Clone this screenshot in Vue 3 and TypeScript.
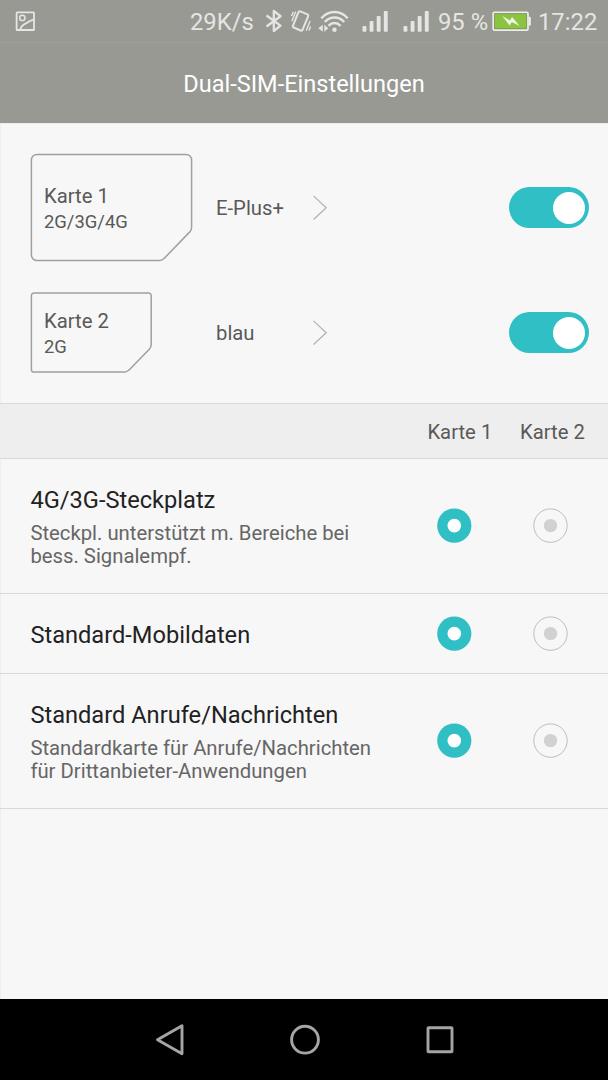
<script setup lang="ts">
import { ref } from 'vue'

interface SimCard {
  name: string
  bands: string
  carrier: string
  size: 'large' | 'small'
  width: number
  height: number
  outline: string
  enabled: boolean
}

interface SlotSetting {
  title: string
  summary: string[]
  selected: number
}

const cards = ref<SimCard[]>([
  {
    name: 'Karte 1',
    bands: '2G/3G/4G',
    carrier: 'E-Plus+',
    size: 'large',
    width: 164,
    height: 109,
    outline: 'M8 1.4H157a5.6 5.6 0 0 1 5.6 5.6V74.5q0 2.6-1.8 4.4L137 103.5q-3.8 4.1-6.8 4.1H8a5.6 5.6 0 0 1-5.6-5.6V7a5.6 5.6 0 0 1 5.6-5.6Z',
    enabled: true
  },
  {
    name: 'Karte 2',
    bands: '2G',
    carrier: 'blau',
    size: 'small',
    width: 124,
    height: 82,
    outline: 'M5 .900H119.600a2.600 2.600 0 0 1 2.600 2.600V52.500q0 2.800-1.900 4.800L101.600 76.400q-3.600 3.600-5.800 3.600H5a2.600 2.600 0 0 1-2.600-2.600V3.500a2.600 2.600 0 0 1 2.600-2.600Z',
    enabled: true
  }
])

const settings = ref<SlotSetting[]>([
  { title: '4G/3G-Steckplatz', summary: ['Steckpl. unterstützt m. Bereiche bei', 'bess. Signalempf.'], selected: 0 },
  { title: 'Standard-Mobildaten', summary: [], selected: 0 },
  { title: 'Standard Anrufe/Nachrichten', summary: ['Standardkarte für Anrufe/Nachrichten', 'für Drittanbieter-Anwendungen'], selected: 0 }
])
</script>

<template>
  <div class="screen">
    <header class="status">
      <svg class="picture" width="20" height="20" viewBox="0 0 20 20" fill="none" stroke="#e5e5e3" stroke-width="1.8">
        <rect x="1.6" y="1.4" width="17.4" height="17.6" rx=".6" />
        <circle cx="7.300" cy="6.900" r="2.700" stroke-width="1.500" />
        <path d="M5.300 18.400c1.200-4.500 3.600-5.200 6.200-6.300C14.300 10.900 15.100 9.200 18.800 8.600" />
      </svg>
      <span class="speed">29K/s</span>
      <svg class="bluetooth" width="18" height="24" viewBox="0 0 18 24" fill="none" stroke="#e5e5e3" stroke-width="2.300" stroke-linejoin="round">
        <path d="M1.500 6.500 15.500 16.600 8.800 22V2l6.700 5.200L1.500 17.500" />
      </svg>
      <svg class="vibrate" width="22" height="24" viewBox="0 0 22 24" fill="none" stroke="#e5e5e3">
        <path d="m10.200 2.400 7.300 3q1.200.5.700 1.700l-5.700 13.700q-.5 1.200-1.700.7l-7.200-3q-1.200-.5-.7-1.700L8.500 3.200q.5-1.300 1.700-.8Z" stroke-width="2" />
        <path d="M1.500 7 3.300 2.900M1.800 12.200 5.800 2.600M20.100 12 16.200 21.700M20.600 17.500 19 21.500" stroke-width="1.400" />
      </svg>
      <svg class="wifi" width="32" height="24" viewBox="0 0 32 24">
        <g fill="none" stroke="#e5e5e3" stroke-width="2.500">
          <path d="M3.300 9.300C10.500 1 22.500 1 29.700 9.300" />
          <path d="M6.800 13c5.400-6 14-6 19.400 0" />
          <path d="M10.500 16.800c3.400-3.700 8.600-3.700 12 0" />
        </g>
        <circle cx="16.500" cy="20.800" r="2.200" fill="#e5e5e3" />
        <path d="M4.800 15.800v7L.3 19.300ZM6.300 15.800v7l4-3.500Z" fill="#e5e5e3" />
      </svg>
      <svg v-for="n in 2" :key="n" :class="'signal signal-' + n" width="26" height="22" viewBox="0 0 26 22" fill="#e5e5e3">
        <rect x=".5" y="16.100" width="3.900" height="5.700" rx="1" />
        <rect x="7.600" y="11.100" width="3.900" height="10.700" rx="1" />
        <rect x="14.700" y="6.100" width="3.900" height="15.700" rx="1" />
        <rect x="21.800" y="1" width="3.900" height="20.800" rx="1" />
      </svg>
      <span class="percent">95 %</span>
      <svg class="battery" width="40" height="20" viewBox="0 0 40 20">
        <rect x="1.200" y="1.300" width="34.800" height="17.800" rx="1.200" fill="#8bc53f" stroke="#ededec" stroke-width="1.700" />
        <rect x="2.600" y="2.700" width="32" height="15" fill="none" stroke="#858c76" stroke-width=".8" />
        <path d="M36.800 5.700h.8q1.200 0 1.200 1.200v6.600q0 1.200-1.200 1.200h-.8Z" fill="#ededec" />
        <path d="m10.200 4.900 7.800 4.700 2-3.700 7.700 9.200-8-4.200-2 3.700Z" fill="#f2f4ed" />
      </svg>
      <span class="clock">17:22</span>
    </header>

    <div class="title-bar"><h1>Dual-SIM-Einstellungen</h1></div>

    <main class="content">
      <section class="cards">
        <div v-for="card in cards" :key="card.name" class="card-row" :class="card.size">
          <div class="sim-column">
            <div class="sim" :class="card.size">
              <svg class="outline" :width="card.width" :height="card.height" fill="none" stroke="#a0a0a0" stroke-width="1.500">
                <path :d="card.outline" />
              </svg>
              <span>{{ card.name }}</span>
              <span class="bands">{{ card.bands }}</span>
            </div>
          </div>
          <span class="carrier">{{ card.carrier }}</span>
          <svg class="chevron" width="16" height="26" viewBox="0 0 16 26" fill="none" stroke="#b1b1b1" stroke-width="1.200">
            <path d="M1.500 .900 14.200 12.700 1.500 24.500" />
          </svg>
          <button class="toggle" :class="{ on: card.enabled }" role="switch" :aria-checked="card.enabled" @click="card.enabled = !card.enabled">
            <i class="knob"></i>
          </button>
        </div>
      </section>

      <div class="columns">
        <span class="first">Karte 1</span>
        <span class="second">Karte 2</span>
      </div>

      <section v-for="item in settings" :key="item.title" class="setting" :class="{ short: !item.summary.length }">
        <div class="copy">
          <h2>{{ item.title }}</h2>
          <p v-for="line in item.summary" :key="line">{{ line }}</p>
        </div>
        <button v-for="(_, i) in cards" :key="i" class="radio" role="radio" :aria-checked="item.selected === i" @click="item.selected = i">
          <svg width="36" height="36" viewBox="0 0 36 36">
            <template v-if="item.selected === i">
              <circle cx="18.300" cy="17.600" r="17.100" fill="#2fbfc5" />
              <circle cx="18.300" cy="17.600" r="6.800" fill="#fff" />
            </template>
            <template v-else>
              <circle cx="18.500" cy="17.600" r="16.700" fill="none" stroke="#bdbdbd" stroke-width="1" />
              <circle cx="18.500" cy="17.600" r="6.700" fill="#d0d1d1" />
            </template>
          </svg>
        </button>
      </section>
    </main>

    <nav class="nav-bar">
      <svg class="back" width="30" height="34" viewBox="0 0 30 34"><path d="M27 2.700v28L2.500 16.700Z" /></svg>
      <svg class="home" width="32" height="34" viewBox="0 0 32 34"><circle cx="16" cy="16.700" r="13.400" /></svg>
      <svg class="recent" width="30" height="34" viewBox="0 0 30 34"><rect x="3" y="4.700" width="24" height="24" rx=".5" /></svg>
    </nav>
  </div>
</template>

<style>
body { margin: 0; }
</style>

<style scoped>
.screen {
  width: 608px;
  height: 1080px;
  overflow: hidden;
  display: flex;
  flex-direction: column;
  background: #f7f7f7;
  font-family: Roboto, "Noto Sans", sans-serif;
  color: #595959;
}
h1, h2, p { margin: 0; font-weight: 400; }
svg { display: block; flex: none; }
button { padding: 0; border: 0; background: none; flex: none; }

.status {
  box-sizing: border-box;
  height: 43px;
  flex: none;
  display: flex;
  align-items: center;
  border-bottom: 1px solid #9fa09a;
  background: #989993;
  color: #e5e5e3;
  font-size: 23.800px;
  line-height: 28px;
  white-space: nowrap;
}
.status span { flex: none; margin-top: 2px; }
.picture { margin-left: 15px; }
.speed { width: 65px; margin-left: 155px; }
.bluetooth { margin-left: 10px; }
.vibrate { margin-left: 7px; }
.wifi { margin-left: 6px; }
.signal-1 { margin-left: 12px; }
.signal-2 { margin-left: 15px; }
.percent { width: 51px; margin-left: 9px; }
.battery { margin-left: 3px; }
.clock { margin-left: 6px; }

.title-bar {
  height: 80px;
  flex: none;
  display: flex;
  align-items: center;
  justify-content: center;
  background: #989993;
}
h1 { color: #fff; font-size: 23.550px; line-height: 28px; margin-top: 1px; }

.content {
  flex: 1;
  border-left: 1px solid #efefef;
  border-top: 1px solid #ececec;
}
.cards { box-sizing: border-box; height: 279px; padding: 29px 19px 0 28px; }
.card-row { display: flex; align-items: center; font-size: 20.270px; line-height: 26px; }
.card-row.large { height: 109px; }
.card-row.small { height: 82px; margin-top: 29.500px; }
.sim-column { width: 187px; flex: none; }
.sim { position: relative; box-sizing: border-box; display: flex; flex-direction: column; justify-content: center; padding-left: 15px; }
.sim.large { width: 163px; height: 109px; padding-top: 3px; }
.sim.small { width: 123px; height: 82px; padding-top: 2px; }
.outline { position: absolute; left: 0; top: 0; }
.bands { font-size: 18.400px; }
.carrier { width: 96px; flex: none; margin-top: 1px; }
.toggle {
  width: 80px;
  height: 41px;
  margin-left: auto;
  padding: 0 4px;
  border-radius: 21px;
  background: #c9c9c9;
  display: flex;
  align-items: center;
}
.toggle.on { background: #2fbfc5; justify-content: flex-end; }
.knob { width: 32px; height: 32px; border-radius: 50%; background: #fff; }

.columns {
  box-sizing: border-box;
  height: 56px;
  margin-left: -1px;
  padding-top: 1px;
  display: flex;
  align-items: center;
  background: #eee;
  border-top: 1px solid #d9d9d9;
  border-bottom: 1px solid #d9d9d9;
  font-size: 20.270px;
  line-height: 24px;
}
.first { margin-left: 427.400px; width: 92.600px; }

.setting {
  box-sizing: border-box;
  height: 135px;
  margin-left: -1px;
  padding-left: 30.400px;
  display: flex;
  align-items: center;
  border-bottom: 1px solid #d9d9d9;
}
.setting.short { height: 80px; }
.copy { width: 405.600px; flex: none; padding-top: 2px; }
h2 { color: #222; font-size: 23.640px; line-height: 28px; }
h2 + p { margin-top: 8px; }
p { font-size: 20.300px; line-height: 23px; color: #666; white-space: nowrap; }
.radio + .radio { margin-left: 60px; }

.nav-bar {
  height: 81px;
  flex: none;
  display: flex;
  align-items: center;
  background: #000;
}
.nav-bar svg { fill: none; stroke: #a5a5a3; stroke-width: 2.900; stroke-linejoin: round; }
.back { margin-left: 155px; }
.home { margin-left: 104px; }
.recent { margin-left: 104px; }
</style>
